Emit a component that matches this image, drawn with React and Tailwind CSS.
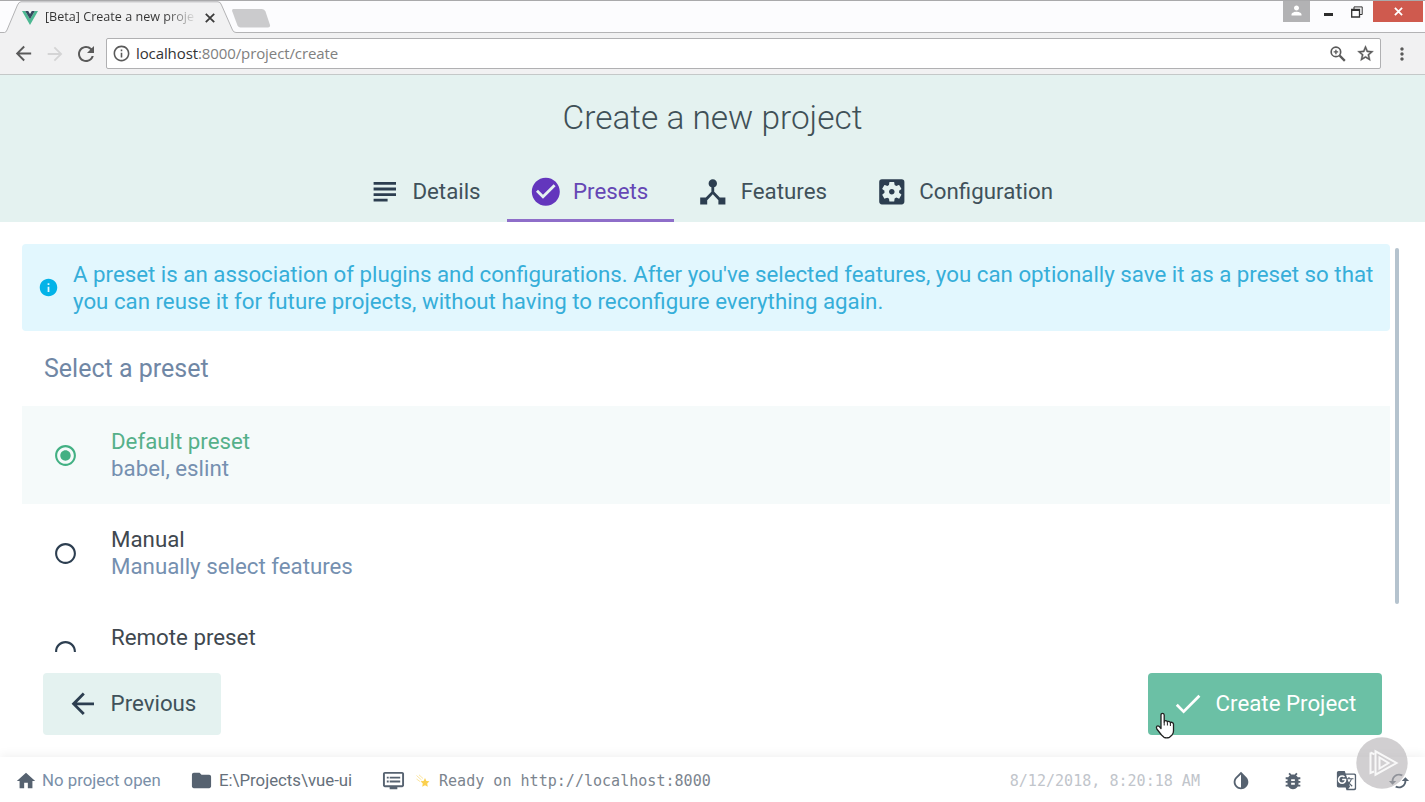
import React from "react";
import {
  MdSubject, MdCheckCircle, MdInfo, MdRadioButtonChecked, MdRadioButtonUnchecked,
  MdArrowBack, MdArrowForward, MdCheck, MdHome, MdFolder, MdInvertColors, MdBugReport,
  MdGTranslate, MdRefresh, MdInfoOutline, MdMoreVert,
  MdSettingsApplications, MdPerson, MdDvr,
} from "react-icons/md";

function HubIcon({ className }) {
  return (
    <svg viewBox="0 0 24 24" fill="currentColor" className={className}>
      <path d="M17 16l-4-4V8.82C14.16 8.4 15 7.3 15 6c0-1.66-1.34-3-3-3S9 4.34 9 6c0 1.3.84 2.4 2 2.82V12l-4 4H3v5h5v-3.05l4-4.2 4 4.2V21h5v-5h-4z" />
    </svg>
  );
}

function CachedIcon({ className }) {
  return (
    <svg viewBox="0 0 24 24" fill="currentColor" className={className}>
      <path d="M19 8l-4 4h3c0 3.31-2.69 6-6 6-1.01 0-1.97-.25-2.8-.7l-1.46 1.46C8.97 19.54 10.43 20 12 20c4.42 0 8-3.58 8-8h3l-4-4zM6 12c0-3.31 2.69-6 6-6 1.01 0 1.97.25 2.8.7l1.46-1.46C15.03 4.46 13.57 4 12 4c-4.42 0-8 3.58-8 8H1l4 4 4-4H6z" />
    </svg>
  );
}

function ZoomIcon({ className }) {
  return (
    <svg viewBox="0 0 24 24" fill="none" stroke="currentColor" className={className}>
      <circle cx="9.500" cy="9.500" r="5.700" strokeWidth="2" />
      <path d="M14 14l6.200 6.200" strokeWidth="2.700" />
      <path d="M9.500 6.800v5.400M6.800 9.500h5.400" strokeWidth="1.600" />
    </svg>
  );
}

function StarIcon({ className }) {
  return (
    <svg viewBox="0 0 24 24" fill="currentColor" stroke="currentColor" strokeWidth=".5" className={className}>
      <path d="M22 9.24l-7.19-.62L12 2 9.190 8.630 2 9.240l5.460 4.730L5.820 21 12 17.270 18.180 21l-1.630-7.030L22 9.240zM12 15.400l-3.760 2.270 1-4.280-3.320-2.880 4.380-.38L12 6.100l1.710 4.040 4.380.38-3.320 2.880 1 4.280L12 15.400z" />
    </svg>
  );
}

function VueLogo() {
  return (
    <svg viewBox="0 0 16 14" className="h-[14px] w-4 shrink-0">
      <path d="M0 0h3.2L8 8.3 12.8 0H16L8 14z" fill="#4db892" />
      <path d="M3.2 0h3L8 3.1 9.8 0h3L8 8.3z" fill="#35495e" />
    </svg>
  );
}

function TabStrip() {
  return (
    <div className="relative flex h-[33px] border-t border-[#a9a9ab] bg-[#fcfcfe]">
      <svg className="absolute left-0 top-0 h-8 w-full" viewBox="0 0 1425 32" preserveAspectRatio="none">
        <path d="M0 31.5H4.500Q6 31.500 7 29L17.500 4Q19 .8 21 .8H218Q220.500 .8 221.500 4L232.500 29Q233.500 31.500 236 31.500H1425V33H0z" fill="#f1f1f2" stroke="#b3b3b5" strokeWidth="1" />
        <path d="M233.500 8H262Q264.500 8 265.500 10.500L270 24Q270.500 26.500 268 26.500H240.500Q238.500 26.500 237.500 24.500L232.300 10.500Q231.500 8 233.500 8z" fill="#cbcbcd" />
      </svg>
      <div className="relative flex h-full w-[216px] items-center pl-[22px] pt-[1px]">
        <VueLogo />
        <div className="ml-[7px] w-[149px] whitespace-nowrap bg-gradient-to-r from-[#333] from-80% to-[#ddd] bg-clip-text font-['Open_Sans',sans-serif] text-[12.6px] text-transparent">
          [Beta] Create a new proje
        </div>
        <svg viewBox="0 0 10 10" className="ml-[11px] size-[10px] shrink-0" stroke="#3b3b3b" strokeWidth="1.800">
          <path d="M.8.8l8.400 8.400M9.200.8L.8 9.200" />
        </svg>
      </div>
      <div className="relative ml-auto flex h-[21px] items-start">
        <div className="flex h-[21px] w-[27px] items-center justify-center bg-[#b2b2b4] pb-[3px] text-white">
          <MdPerson className="size-[15px]" />
        </div>
        <div className="flex h-[21px] w-[36px] items-center justify-center pt-1.5">
          <div className="h-[3px] w-[9px] bg-[#2d2d2d]" />
        </div>
        <div className="flex h-[21px] w-[26px] items-center justify-start pl-[5px]">
          <svg viewBox="0 0 12 12" className="size-3" fill="none" stroke="#333">
            <path d="M3 3V.9H11.200V8.500H9" />
            <path d="M.7 3.500H8.500V11H.7z" strokeWidth="1.300" />
            <path d="M.7 4H8.500" strokeWidth="2" />
          </svg>
        </div>
        <div className="ml-[1px] mr-[2px] flex h-[21px] w-[50px] items-center justify-center bg-[#cf5a4e] text-white">
          <svg viewBox="0 0 10 10" className="size-[9px]" stroke="currentColor" strokeWidth="2">
            <path d="M1 1l8 8M9 1L1 9" />
          </svg>
        </div>
      </div>
    </div>
  );
}

function Toolbar() {
  return (
    <div className="flex h-[42px] items-center border-b border-[#c4c8c8] bg-[#f1f1f2] text-[#5a5a5a]">
      <div className="flex w-[106px] items-center pl-[12px]">
        <MdArrowBack className="size-[23px]" />
        <MdArrowForward className="ml-[9px] size-[22px] text-[#d4d4d5]" />
        <MdRefresh className="ml-[8px] size-[24px]" />
      </div>
      <div className="flex h-[31px] w-[1275px] items-center rounded-[2px] border border-[#b0b0b2] bg-white pl-[5px] pr-[5px]">
        <MdInfoOutline className="size-[19px]" />
        <div className="ml-[5px] font-['Open_Sans',sans-serif] text-[15px] tracking-[-0.1px] text-[#808080]">
          <span className="text-[#333]">localhost</span>:8000/project/create
        </div>
        <ZoomIcon className="ml-auto size-[20px]" />
        <StarIcon className="ml-[8px] size-[19px]" />
      </div>
      <MdMoreVert className="ml-[11px] size-[20px]" />
    </div>
  );
}

function Step({ icon, label, active }) {
  return (
    <div className={active
      ? "flex h-[60px] items-center border-b-[3px] border-[#8e6ec9] pl-[22px] pr-[26px] pt-[3px] text-[#6336bd]"
      : "flex h-[60px] items-center border-b-[3px] border-transparent pl-[22px] pr-[26px] pt-[3px] text-[#2c3e50]"}>
      {icon}
      <span className={active ? "ml-[10.8px] text-[#6547b5]" : "ml-[10.8px] text-[#40515a]"}>{label}</span>
    </div>
  );
}

function Preset({ title, detail, selected }) {
  return (
    <div className={selected ? "flex h-[98px] shrink-0 items-center bg-[#f5fafa] pl-[31px]" : "flex h-[98px] shrink-0 items-center pl-[31px]"}>
      {selected
        ? <MdRadioButtonChecked className="size-[25px] text-[#42b083]" />
        : <MdRadioButtonUnchecked className="size-[25px] text-[#2c3e50]" />}
      <div className="ml-[33px] leading-[27px]">
        <div className={selected ? "text-[#55b08a]" : "text-[#40484f]"}>{title}</div>
        <div className="h-[27px] text-[#7590b0]">{detail}</div>
      </div>
    </div>
  );
}

function HandCursor() {
  return (
    <svg viewBox="0 0 20 27" className="absolute left-[7px] top-[39px] h-[27px] w-5" fill="#fff" stroke="#222" strokeWidth="1.300" strokeLinejoin="round">
      <path d="M6 16V3Q6 1.300 7.500 1.300T9.200 3V10Q9.300 8.600 10.800 8.700T12.400 10.200Q12.600 9.200 13.900 9.400T15.400 11Q15.800 10 17 10.400T18.500 12V19Q18.500 21.500 17 23L14.500 25.300Q11.500 26.300 9 25.300L6.500 23L1.800 17Q1 15.300 1.900 14.300T4.400 14.600L6 16.500z" />
      <path d="M9.200 10v3.500M12.400 10.500v3M15.400 11v3" fill="none" strokeWidth="1" />
    </svg>
  );
}

function StatusBar() {
  return (
    <div className="relative flex h-[45px] items-center bg-white pt-[2px] text-[16.8px] text-[#566270] shadow-[0_-2px_10px_rgba(0,0,0,0.06)]">
      <MdHome className="ml-[15px] size-[22px]" />
      <span className="ml-[5px] w-[118px] whitespace-nowrap text-[#7a8fa8]">No project open</span>
      <MdFolder className="ml-[30px] size-[23px]" />
      <span className="ml-[6px] w-[133px] whitespace-nowrap text-[#66707b]">E:\Projects\vue-ui</span>
      <MdDvr className="ml-[30px] size-[23px]" />
      <svg viewBox="0 0 14 14" className="ml-[11px] size-[14px]">
        <path d="M9 4l1.400 2.900 3.100.4-2.300 2.200.6 3.200L9 11.200l-2.800 1.500.6-3.200-2.300-2.200 3.100-.4z" fill="#fbd04f" />
        <path d="M.5 1.500L5.500 6M3 .8L7 4.500M.5 5L4 7.500" stroke="#fbe5a0" strokeWidth="1" />
      </svg>
      <span className="ml-[9px] whitespace-pre pt-[2px] font-['DejaVu_Sans_Mono',monospace] text-[15.05px] text-[#7b848e]">Ready on http://localhost:8000</span>
      <span className="ml-auto whitespace-pre pt-[2px] font-['DejaVu_Sans_Mono',monospace] text-[15.05px] text-[#c1c5cb]">8/12/2018, 8:20:18 AM</span>
      <MdInvertColors className="ml-[30px] size-[22px]" />
      <MdBugReport className="ml-[30px] size-[22px]" />
      <MdGTranslate className="ml-[32px] size-[21px]" />
      <CachedIcon className="ml-[31px] mr-[15px] size-[22px]" />
      <svg viewBox="0 0 52 52" className="absolute right-[17px] top-[-20px] size-[52px]">
        <circle cx="26" cy="26" r="25.700" fill="#b4b2b4" fillOpacity=".62" />
        <g fill="none" stroke="#fff" strokeOpacity=".85" strokeWidth="2">
          <path d="M14.500 15.500V36L18 34.500M14.500 15.500l4 1.800" />
          <path d="M19.500 14.300V37.700L40.500 26z" />
          <path d="M23.500 20.500v11l9-5.500z" />
        </g>
      </svg>
    </div>
  );
}

export default function App() {
  return (
    <div className="flex h-[802px] w-[1425px] flex-col overflow-hidden bg-white font-['Roboto',sans-serif] text-[22.29px]">
      <TabStrip />
      <Toolbar />
      <header className="flex h-[147px] shrink-0 flex-col items-center bg-[#e4f2f0]">
        <h1 className="mt-[22px] h-[65px] text-[33.4px] font-light leading-[42px] text-[#3f5057]">Create a new project</h1>
        <nav className="flex">
          <Step icon={<MdSubject className="size-[33.6px]" />} label="Details" />
          <Step active icon={<MdCheckCircle className="size-[33.6px]" />} label="Presets" />
          <Step icon={<HubIcon className="size-[33.6px]" />} label="Features" />
          <Step icon={<MdSettingsApplications className="size-[33.6px]" />} label="Configuration" />
        </nav>
      </header>
      <main className="flex h-[430px] shrink-0 overflow-hidden pl-[22px] pt-[22px]">
        <div className="flex w-[1368px] flex-col">
          <div className="flex h-[87px] shrink-0 items-center rounded-[4px] bg-[#e2f7fe] pl-4">
            <MdInfo className="size-[21px] shrink-0 text-[#03b3e8]" />
            <p className="ml-[14px] whitespace-nowrap leading-[27px] text-[#36aed9]">
              A preset is an association of plugins and configurations. After you've selected features, you can optionally save it as a preset so that
              <br />
              you can reuse it for future projects, without having to reconfigure everything again.
            </p>
          </div>
          <h2 className="flex h-[75px] shrink-0 items-center pl-[22px] text-[25px] text-[#7087a5]">Select a preset</h2>
          <Preset selected title="Default preset" detail="babel, eslint" />
          <Preset title="Manual" detail="Manually select features" />
          <Preset title="Remote preset" />
        </div>
        <div className="ml-[5px] mt-[4px] h-[356px] w-[4px] rounded-full bg-[#b5c3ce]" />
      </main>
      <div className="flex h-[105px] shrink-0 items-start justify-between pl-[43px] pr-[43px] pt-[21px]">
        <button className="flex h-[62px] w-[178px] items-center rounded-[4px] bg-[#e4f2f0] pl-[23px] text-[#40515a]">
          <MdArrowBack className="size-[33.6px] text-[#2c3e50]" />
          <span className="ml-[11px]">Previous</span>
        </button>
        <button className="relative flex h-[62px] w-[234px] items-center rounded-[4px] bg-[#6bc0a5] pl-[23px] text-white">
          <MdCheck className="size-[33.6px]" />
          <span className="ml-[11px] whitespace-nowrap">Create Project</span>
          <HandCursor />
        </button>
      </div>
      <StatusBar />
    </div>
  );
}
